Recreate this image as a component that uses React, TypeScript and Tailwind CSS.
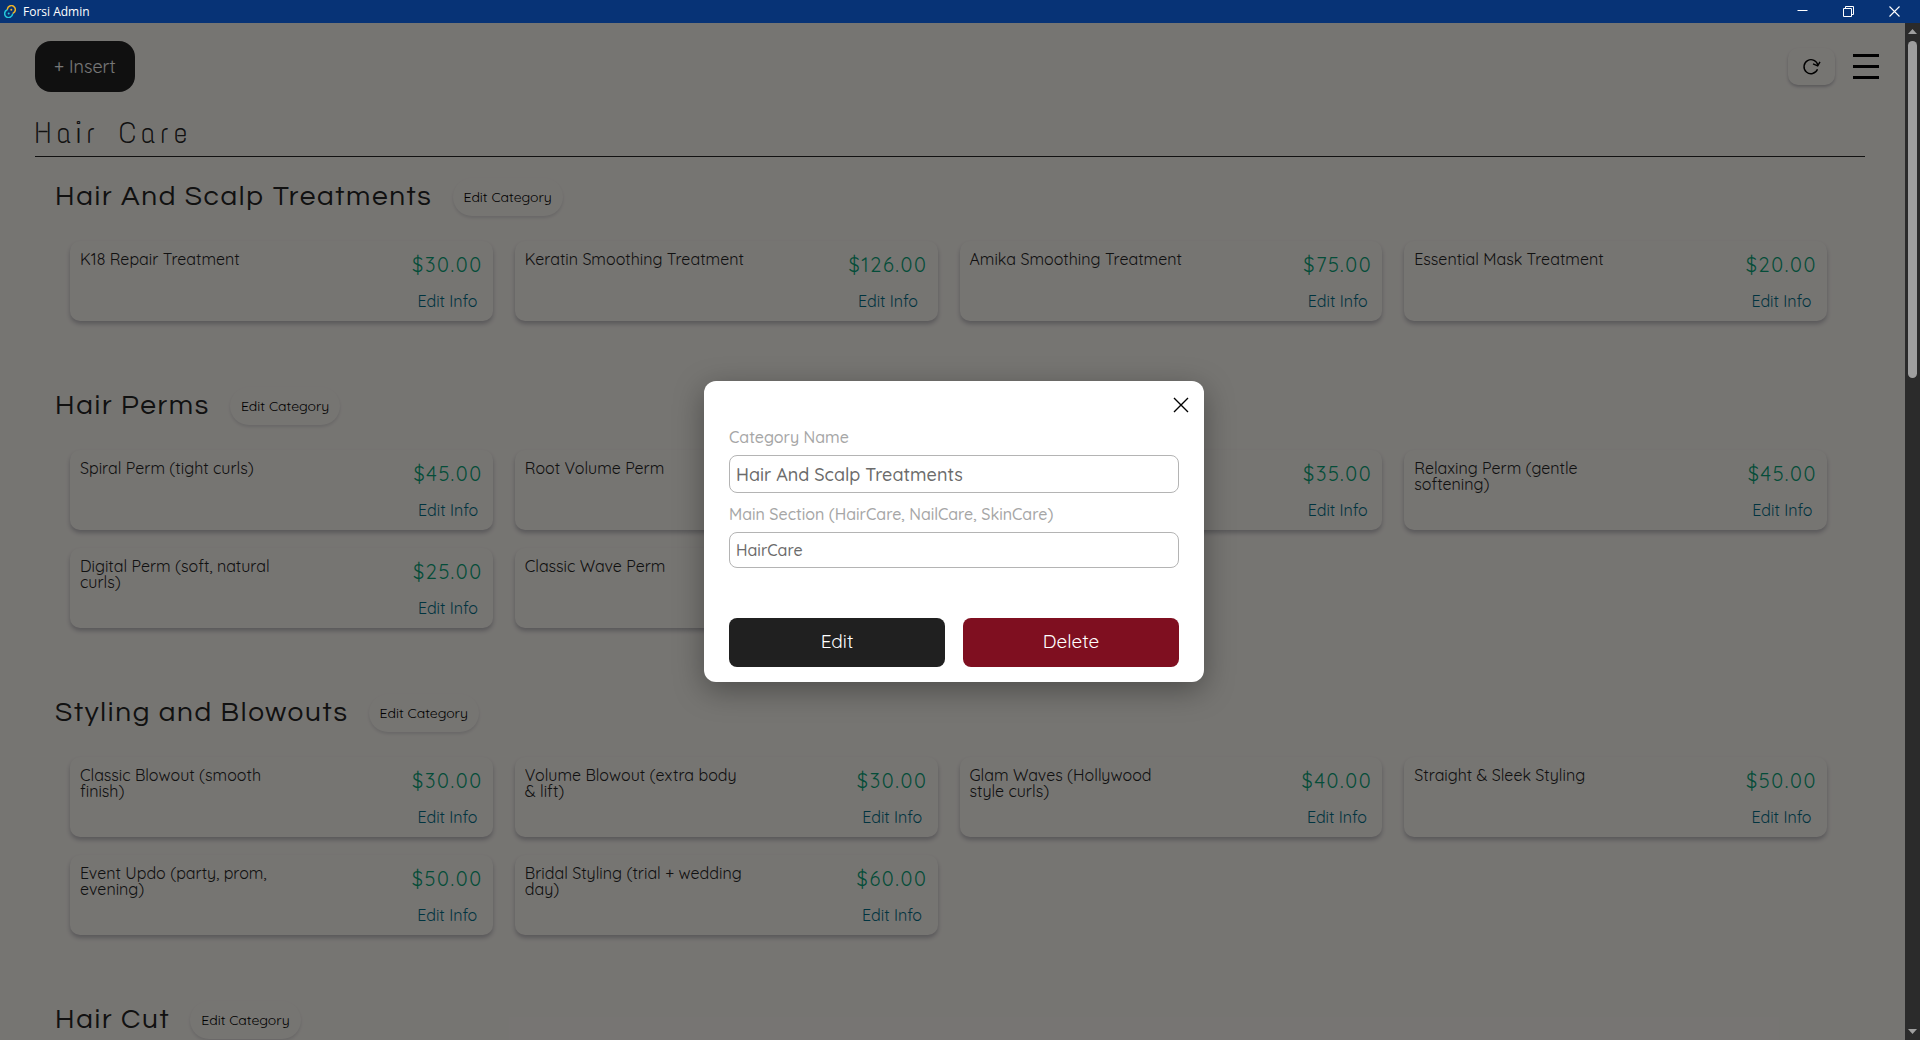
type Item = { name: string; price: string };
type Category = { name: string; items: Item[] };

const categories: Category[] = [
  {
    name: "Hair And Scalp Treatments",
    items: [
      { name: "K18 Repair Treatment", price: "$30.00" },
      { name: "Keratin Smoothing Treatment", price: "$126.00" },
      { name: "Amika Smoothing Treatment", price: "$75.00" },
      { name: "Essential Mask Treatment", price: "$20.00" },
    ],
  },
  {
    name: "Hair Perms",
    items: [
      { name: "Spiral Perm (tight curls)", price: "$45.00" },
      { name: "Root Volume Perm", price: "$35.00" },
      { name: "Body Wave Perm", price: "$35.00" },
      { name: "Relaxing Perm (gentle softening)", price: "$45.00" },
      { name: "Digital Perm (soft, natural curls)", price: "$25.00" },
      { name: "Classic Wave Perm", price: "$30.00" },
    ],
  },
  {
    name: "Styling and Blowouts",
    items: [
      { name: "Classic Blowout (smooth finish)", price: "$30.00" },
      { name: "Volume Blowout (extra body & lift)", price: "$30.00" },
      { name: "Glam Waves (Hollywood style curls)", price: "$40.00" },
      { name: "Straight & Sleek Styling", price: "$50.00" },
      { name: "Event Updo (party, prom, evening)", price: "$50.00" },
      { name: "Bridal Styling (trial + wedding day)", price: "$60.00" },
    ],
  },
  { name: "Hair Cut", items: [] },
];

function AppLogo() {
  return (
    <svg viewBox="0 0 12 13" className="h-[13px] w-3" fill="none" strokeWidth="1.5" strokeLinecap="round" aria-hidden="true">
      <path d="M3.4 4.2A4 4 0 1 1 9.2 8.2" stroke="#f0b429" />
      <path d="M8.6 9.2A4 4 0 1 1 2.9 5" stroke="#24c8db" />
      <circle cx="7.3" cy="4.8" r="1" fill="#f0b429" />
      <circle cx="4.7" cy="8.6" r="1" fill="#24c8db" />
    </svg>
  );
}

function TitleBar() {
  return (
    <div className="flex h-[23px] shrink-0 items-center justify-between bg-[#073376] pr-5 pl-1 text-white">
      <div className="flex items-center gap-[7px]">
        <AppLogo />
        <span className="font-['Open_Sans',sans-serif] text-xs leading-none">Forsi Admin</span>
      </div>
      <div className="flex items-center gap-[35px]">
        <button type="button" aria-label="Minimize">
          <svg viewBox="0 0 11 11" className="size-[11px]" stroke="currentColor" aria-hidden="true">
            <path d="M.5 4.5h10" />
          </svg>
        </button>
        <button type="button" aria-label="Restore">
          <svg viewBox="0 0 11 11" className="size-[11px]" fill="none" stroke="currentColor" aria-hidden="true">
            <path d="M.5 2.5h8v8h-8zM2.5 2.5V.5h8v8h-2" />
          </svg>
        </button>
        <button type="button" aria-label="Close window">
          <svg viewBox="0 0 11 11" className="size-[11px]" stroke="currentColor" strokeWidth="1.1" aria-hidden="true">
            <path d="M.5.5l10 10M10.5.5l-10 10" />
          </svg>
        </button>
      </div>
    </div>
  );
}

function Header() {
  return (
    <header className="flex items-center justify-between pt-[18px] pr-[26px] pl-[35px]">
      <button type="button" className="h-[51px] rounded-2xl bg-[#202020] px-[19px] text-lg text-[#eeeeee]">
        + Insert
      </button>
      <div className="flex items-center gap-[18px]">
        <button
          type="button"
          aria-label="Refresh"
          className="flex h-[37px] w-[47px] items-center justify-center rounded-[10px] shadow-[0_2px_3px_rgba(60,60,80,0.3)]"
        >
          <svg viewBox="0 0 20 20" className="size-5" fill="none" stroke="#000" strokeWidth="1.4" aria-hidden="true">
            <path d="M15.5 12.3A7 7 0 1 1 15.9 8.4" />
            <path d="M11 6.8l4.7 2 2.3-4" />
          </svg>
        </button>
        <button type="button" aria-label="Menu" className="flex w-[26px] flex-col gap-2">
          <span className="h-[3px] bg-black" />
          <span className="h-[3px] bg-black" />
          <span className="h-[3px] bg-black" />
        </button>
      </div>
    </header>
  );
}

function ServiceCard({ item }: { item: Item }) {
  return (
    <li className="flex h-20 justify-between rounded-[10px] p-2.5 shadow-[0_3px_4px_rgba(60,60,80,0.32)]">
      <h3 className="w-[220px] text-base leading-4 text-[#222222]">{item.name}</h3>
      <div className="flex flex-col items-center">
        <p className="text-xl leading-7 tracking-[0.08em] text-[#089a72]">{item.price}</p>
        <button type="button" className="mt-3 text-base leading-5 text-[#006880]">
          Edit Info
        </button>
      </div>
    </li>
  );
}

function CategorySection({ category }: { category: Category }) {
  return (
    <section className="pb-[66px]">
      <div className="flex items-center gap-5 pl-5">
        <h2 className="font-['Questrial','Noto_Sans',sans-serif] text-[28px] leading-[38px] tracking-[0.06em] text-[#222222]">
          {category.name}
        </h2>
        <button
          type="button"
          className="h-[38px] rounded-full px-[11px] text-sm text-black shadow-[0_2px_3px_rgba(60,60,80,0.15)]"
        >
          Edit Category
        </button>
      </div>
      <ul className="mt-[25px] grid grid-cols-4 gap-x-[22px] gap-y-[18px] pr-[38px] pl-[35px]">
        {category.items.map((item) => (
          <ServiceCard key={item.name} item={item} />
        ))}
      </ul>
    </section>
  );
}

function EditCategoryDialog() {
  return (
    <div className="absolute inset-0 flex items-center justify-center bg-black/50 pl-[3px]">
      <form
        role="dialog"
        aria-label="Edit category"
        className="flex w-[500px] flex-col rounded-xl bg-white px-[25px] pt-4 pb-[15px] shadow-[0_8px_30px_rgba(0,0,0,0.35)]"
      >
        <button type="button" aria-label="Close" className="-mr-2.5 self-end">
          <svg viewBox="0 0 16 16" className="size-4" stroke="#000" strokeWidth="1.4" aria-hidden="true">
            <path d="M1 1l14 14M15 1L1 15" />
          </svg>
        </button>
        <label htmlFor="category-name" className="mt-3.5 text-base leading-5 font-medium text-[#a6a6a6]">
          Category Name
        </label>
        <input
          id="category-name"
          placeholder="Hair And Scalp Treatments"
          className="mt-2 h-[38px] rounded-lg border border-[#b4b4b4] px-1.5 text-lg font-medium placeholder:text-[#6b6b6b]"
        />
        <label htmlFor="main-section" className="mt-[11px] text-base leading-5 font-medium text-[#a6a6a6]">
          Main Section (HairCare, NailCare, SkinCare)
        </label>
        <input
          id="main-section"
          placeholder="HairCare"
          className="mt-2 h-9 rounded-lg border border-[#b4b4b4] px-1.5 text-base font-medium placeholder:text-[#6b6b6b]"
        />
        <div className="mt-[50px] grid grid-cols-2 gap-[18px]">
          <button type="submit" className="h-[49px] rounded-lg bg-[#202020] pb-0.5 text-[19px] text-white">
            Edit
          </button>
          <button type="button" className="h-[49px] rounded-lg bg-[#7f0f20] pb-0.5 text-[19px] text-white">
            Delete
          </button>
        </div>
      </form>
    </div>
  );
}

function ScrollBar() {
  return (
    <div className="flex w-[15px] shrink-0 flex-col items-center bg-[#2b2b2b] py-1.5" aria-hidden="true">
      <svg viewBox="0 0 9 5" className="h-[5px] w-[9px]" fill="#9f9f9f">
        <path d="M0 5L4.5 0 9 5z" />
      </svg>
      <div className="my-[7px] w-full grow px-[3px]">
        <div className="h-[34.4%] rounded-full bg-[#9f9f9f]" />
      </div>
      <svg viewBox="0 0 9 5" className="h-[5px] w-[9px]" fill="#9f9f9f">
        <path d="M0 0L4.5 5 9 0z" />
      </svg>
    </div>
  );
}

export default function App() {
  return (
    <div className="flex h-screen flex-col overflow-hidden font-['Quicksand','Noto_Sans',sans-serif]">
      <TitleBar />
      <div className="flex min-h-0 grow">
        <div className="relative min-w-0 grow overflow-hidden bg-[#edeae5]">
          <Header />
          <main className="pr-10 pl-[35px]">
            <h1 className="mt-[21px] mb-[21px] border-b border-[#222222] pb-[3px] font-['Text_Me_One','Noto_Sans',sans-serif] text-3xl leading-10 tracking-[0.15em] text-[#222222]">
              Hair Care
            </h1>
            {categories.map((category) => (
              <CategorySection key={category.name} category={category} />
            ))}
          </main>
          <EditCategoryDialog />
        </div>
        <ScrollBar />
      </div>
    </div>
  );
}
